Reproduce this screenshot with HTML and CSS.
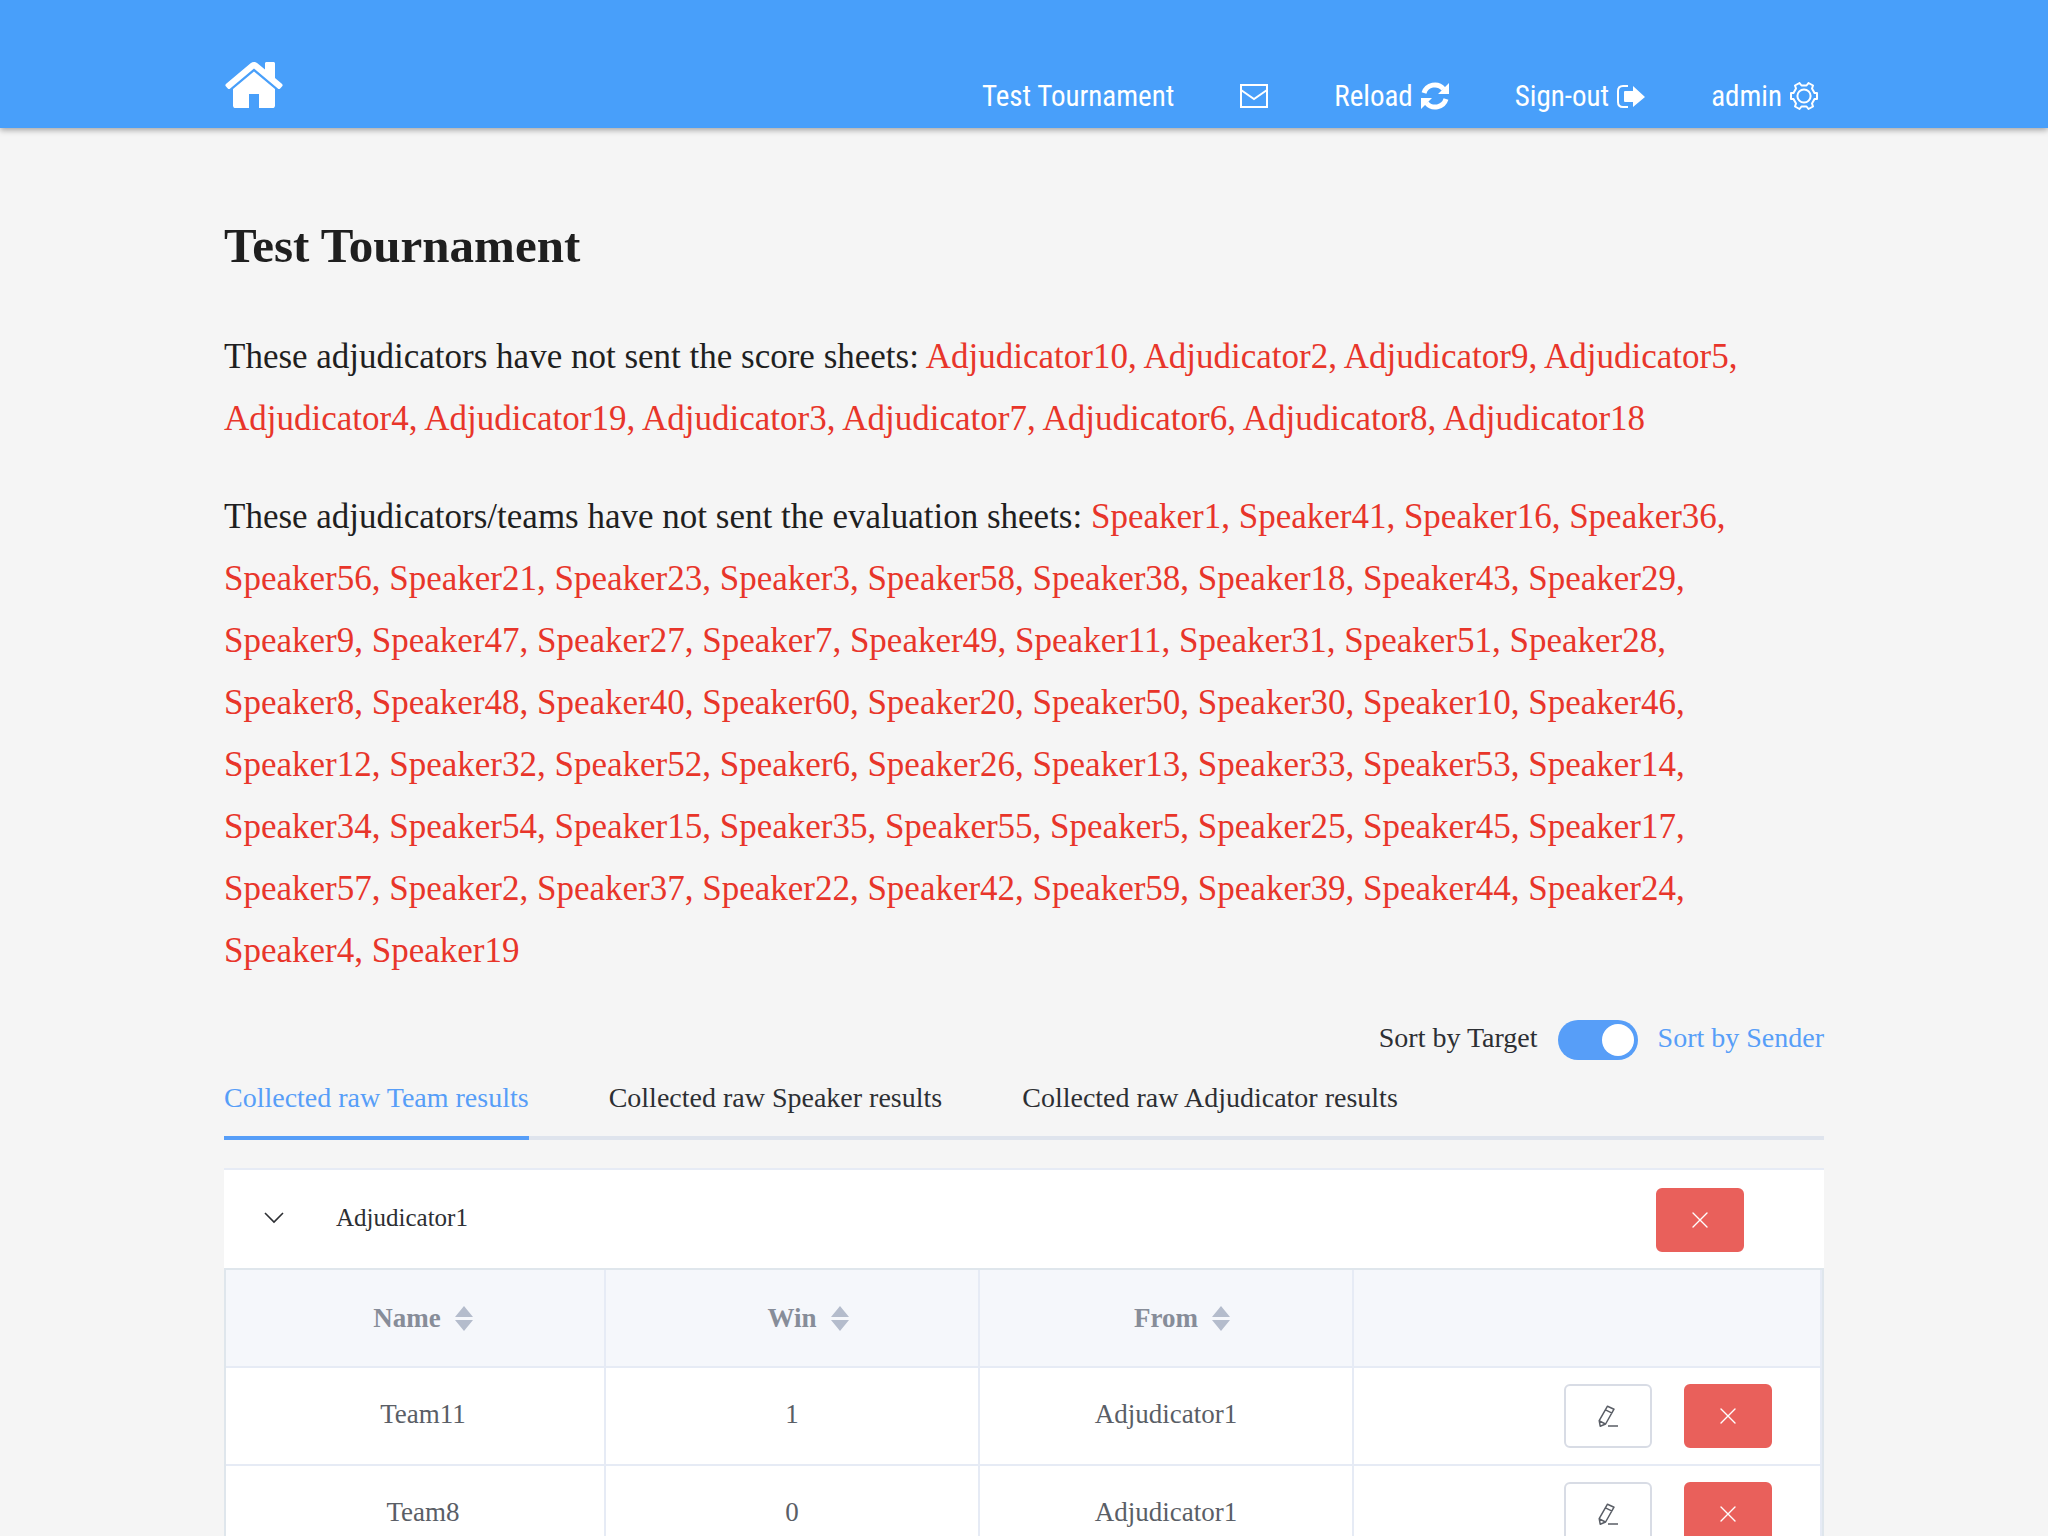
FILE: index.html
```html
<!DOCTYPE html>
<html lang="en">
<head>
<meta charset="utf-8">
<meta name="viewport" content="width=device-width, initial-scale=1">
<title>Test Tournament</title>
<link rel="stylesheet" href="styles.css">
</head>
<body>
<svg class="sprite" aria-hidden="true">
  <symbol id="close" viewBox="0 0 16 16"><path d="M1 1L15 15M15 1L1 15" fill="none" stroke="currentColor" stroke-width="1.4" stroke-linecap="round"/></symbol>
  <symbol id="edit" viewBox="0 0 20 22"><path d="M9.5 1.2L16 4.2L7.6 19L2.2 21.2L1.2 15.6Z M8 5.2L14 8.2M1.4 15.8L7.4 19M10 21H20" fill="none" stroke="currentColor" stroke-width="1.5" stroke-linejoin="round"/></symbol>
  <symbol id="sort" viewBox="0 0 18 25"><path d="M9 0L18 11H0ZM0 14H18L9 25Z" fill="currentColor"/></symbol>
</svg>
<header class="site-header">
  <div class="container site-header__inner">
    <a class="home" href="#" aria-label="Home">
      <svg width="58" height="46" viewBox="0 0 58 46" fill="#fff"><path d="M1.2 21.8L25.6 1.3C27.7-.4 30.3-.4 32.4 1.3L40 7.6V1.6C40 .6 40.6 0 41.6 0H48.4C49.4 0 50 .6 50 1.6V16L56.8 21.8C57.8 22.6 57.9 23.4 57.2 24.3L55.2 26.4C54.5 27.2 53.6 27.2 52.8 26.5L29 6.6L5.2 26.5C4.4 27.2 3.5 27.2 2.8 26.4L.8 24.3C.1 23.4.2 22.6 1.2 21.8Z"/><path d="M29 9.6L50 27V43.4C50 45 49 46 47.4 46H34V32H24V46H10.6C9 46 8 45 8 43.4V27Z"/></svg>
    </a>
    <nav class="nav">
      <a href="#">Test Tournament</a>
      <a href="#" aria-label="Messages"><svg width="28" height="28" viewBox="0 0 28 28" fill="none" stroke="#fff" stroke-width="2"><path d="M1 3H27V25H1ZM1 8L14 17L27 8"/></svg></a>
      <a href="#">Reload <svg width="28" height="28" viewBox="0 0 28 28"><path d="M3 11A11.3 11.3 0 0 1 22.5 7M25 17A11.3 11.3 0 0 1 5.5 21" fill="none" stroke="#fff" stroke-width="5"/><path d="M28 1V12H17ZM0 27V16H11Z" fill="#fff"/></svg></a>
      <a href="#">Sign-out <svg width="28" height="28" viewBox="0 0 28 28"><path d="M11 4H6Q1 4 1 9V20Q1 25 6 25H11" fill="none" stroke="#fff" stroke-width="2"/><path d="M8 9H16V4L28 15L16 25V20H8Q7 20 7 19V10Q7 9 8 9Z" fill="#fff"/></svg></a>
      <a href="#">admin <svg width="28" height="28" viewBox="0 0 28 28" fill="none" stroke="#fff" stroke-width="2"><circle cx="14" cy="14" r="6.6"/><path stroke-linejoin="round" d="M9.500 1L11.500 3.500H16.500L18.500 1L23 3.500L22 6.500L24.500 11H27V17H24.500L22 21.500L23 24.500L18.500 27L16.500 24.500H11.500L9.500 27L5 24.500L6 21.500L3.500 17H1V11H3.500L6 6.500L5 3.500Z"/></svg></a>
    </nav>
  </div>
</header>
<main class="container">
  <h1>Test Tournament</h1>
  <p class="notice">These adjudicators have not sent the score sheets: <span class="missing">Adjudicator10, Adjudicator2, Adjudicator9, Adjudicator5,<br>Adjudicator4, Adjudicator19, Adjudicator3, Adjudicator7, Adjudicator6, Adjudicator8, Adjudicator18</span></p>
  <p class="notice">These adjudicators/teams have not sent the evaluation sheets: <span class="missing">Speaker1, Speaker41, Speaker16, Speaker36,<br>Speaker56, Speaker21, Speaker23, Speaker3, Speaker58, Speaker38, Speaker18, Speaker43, Speaker29,<br>Speaker9, Speaker47, Speaker27, Speaker7, Speaker49, Speaker11, Speaker31, Speaker51, Speaker28,<br>Speaker8, Speaker48, Speaker40, Speaker60, Speaker20, Speaker50, Speaker30, Speaker10, Speaker46,<br>Speaker12, Speaker32, Speaker52, Speaker6, Speaker26, Speaker13, Speaker33, Speaker53, Speaker14,<br>Speaker34, Speaker54, Speaker15, Speaker35, Speaker55, Speaker5, Speaker25, Speaker45, Speaker17,<br>Speaker57, Speaker2, Speaker37, Speaker22, Speaker42, Speaker59, Speaker39, Speaker44, Speaker24,<br>Speaker4, Speaker19</span></p>
  <div class="sort-by">
    <label for="sort-toggle">Sort by Target</label>
    <input class="switch" id="sort-toggle" type="checkbox" role="switch" checked>
    <label class="active" for="sort-toggle">Sort by Sender</label>
  </div>
  <div class="tabs" role="tablist">
    <button class="tab tab--active" role="tab" aria-selected="true">Collected raw Team results</button>
    <button class="tab" role="tab" aria-selected="false">Collected raw Speaker results</button>
    <button class="tab" role="tab" aria-selected="false">Collected raw Adjudicator results</button>
  </div>
  <section class="group">
    <div class="group__header">
      <button class="group__toggle" aria-expanded="true"><svg width="20" height="12" viewBox="0 0 20 12"><path d="M1 1L10 10L19 1" fill="none" stroke="currentColor" stroke-width="1.6"/></svg>Adjudicator1</button>
      <button class="btn btn--danger" aria-label="Delete all"><svg width="16" height="16"><use href="#close"/></svg></button>
    </div>
    <table class="results">
      <colgroup><col class="col-name"><col class="col-data"><col class="col-data"><col></colgroup>
      <thead><tr>
        <th><button class="sort">Name<svg width="18" height="25"><use href="#sort"/></svg></button></th>
        <th><button class="sort">Win<svg width="18" height="25"><use href="#sort"/></svg></button></th>
        <th><button class="sort">From<svg width="18" height="25"><use href="#sort"/></svg></button></th>
        <th></th>
      </tr></thead>
      <tbody>
        <tr><td>Team11</td><td>1</td><td>Adjudicator1</td><td><div class="actions"><button class="btn" aria-label="Edit"><svg width="20" height="22"><use href="#edit"/></svg></button><button class="btn btn--danger" aria-label="Delete"><svg width="16" height="16"><use href="#close"/></svg></button></div></td></tr>
        <tr><td>Team8</td><td>0</td><td>Adjudicator1</td><td><div class="actions"><button class="btn" aria-label="Edit"><svg width="20" height="22"><use href="#edit"/></svg></button><button class="btn btn--danger" aria-label="Delete"><svg width="16" height="16"><use href="#close"/></svg></button></div></td></tr>
      </tbody>
    </table>
  </section>
</main>
</body>
</html>
```
FILE: styles.css
```css
* { box-sizing: border-box; }
body {
  margin: 0;
  background: #f5f5f5;
  color: #1f1f1f;
  font-family: "Liberation Serif", "Times New Roman", serif;
  font-size: 28px;
}
button { padding: 0; border: 0; background: none; color: inherit; font: inherit; cursor: pointer; }
.sprite { display: none; }
.container { max-width: 1600px; margin: 0 auto; }

.site-header { background: #489ffa; box-shadow: 0 2px 6px rgba(0, 0, 0, .35); }
.site-header__inner {
  display: flex;
  justify-content: space-between;
  align-items: flex-end;
  height: 128px;
  padding: 0 6px 0 0;
}
.home { padding: 0 0 20px 1px; line-height: 0; }
.nav { display: flex; gap: 66px; padding-bottom: 12px; }
.nav a {
  display: flex;
  align-items: center;
  gap: 8px;
  color: #fff;
  font: 29px/40px "Liberation Sans Narrow", "Roboto Condensed", Roboto, sans-serif;
  text-decoration: none;
}

h1 { margin: 0; padding: 84px 0 46px; font-size: 49px; line-height: 68px; }
.notice { margin: 0 0 36px; font-size: 35px; line-height: 62px; }
.missing { color: #e8352a; }

.sort-by {
  display: flex;
  justify-content: flex-end;
  align-items: center;
  gap: 20px;
  padding-top: 2px;
  color: #2d2f33;
}
.sort-by label { padding-bottom: 4px; }
.active { color: #579ef8; }
.switch {
  appearance: none;
  display: flex;
  justify-content: flex-end;
  width: 80px;
  height: 40px;
  margin: 0;
  padding: 4px;
  border-radius: 20px;
  background: #579ef8;
}
.switch::before { content: ""; width: 32px; height: 32px; border-radius: 50%; background: #fff; }
.switch:not(:checked) { justify-content: flex-start; background: #d8dce5; }

.tabs { display: flex; gap: 80px; border-bottom: 4px solid #dfe4ed; color: #2d2f33; }
.tab { height: 80px; margin-bottom: -4px; border-bottom: 4px solid transparent; white-space: nowrap; }
.tab--active { border-color: #579ef8; color: #579ef8; }

.group { margin-top: 28px; background: #fff; }
.group__header {
  display: flex;
  justify-content: space-between;
  align-items: center;
  padding: 18px 80px 16px 40px;
  border-top: 2px solid #e6ebf5;
}
.group__toggle { display: flex; align-items: center; gap: 52px; padding-bottom: 4px; color: #2d2f33; font-size: 25px; }
.btn {
  display: flex;
  justify-content: center;
  align-items: center;
  width: 88px;
  height: 64px;
  border: 2px solid #d8dce5;
  border-radius: 6px;
  background: #fff;
  color: #5a5e66;
}
.btn--danger { border-color: #e9605b; background: #e9605b; color: #fff; }

.results {
  width: 100%;
  table-layout: fixed;
  border-collapse: separate;
  border-spacing: 0;
  border: 2px solid #dfe6ec;
  border-bottom: 0;
  color: #5a5e66;
  font-size: 27px;
  text-align: center;
}
.col-name { width: 380px; }
.col-data { width: 374px; }
.results th, .results td {
  height: 98px;
  padding: 0 0 4px;
  border-right: 2px solid #e6ebf5;
  border-bottom: 2px solid #e6ebf5;
}
.results th { padding: 0 0 0 32px; background: #f5f7fb; color: #878d99; }
.results th:first-child, .results td:first-child { padding-left: 16px; }
.results td:last-child { padding: 0; }
.sort { display: inline-flex; align-items: center; gap: 14px; font-weight: bold; }
.sort svg { color: #b4bccc; }
.actions { display: flex; justify-content: flex-end; gap: 32px; padding-right: 48px; }
```
